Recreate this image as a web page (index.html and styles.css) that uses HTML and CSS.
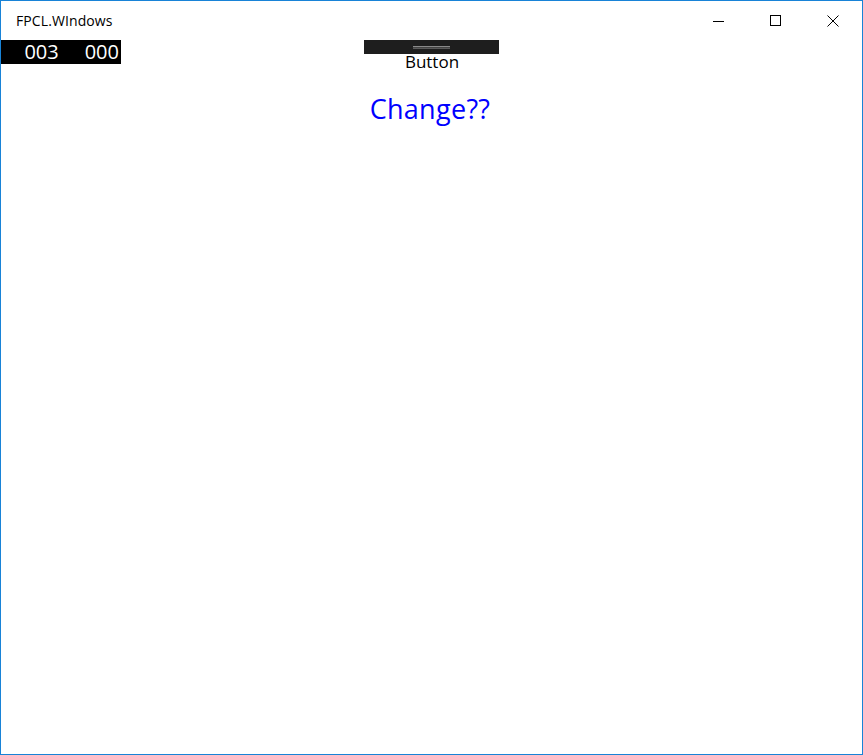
FILE: index.html
```html
<!DOCTYPE html>
<html>
<head>
<meta charset="utf-8">
<link rel="stylesheet" href="styles.css">
</head>
<body>
<div class="window">
  <div class="titlebar">
    <div class="title">FPCL.WIndows</div>
    <div class="controls">
      <div class="ctl"><svg width="12" height="12" viewBox="0 0 12 12"><path d="M0 6.5H11" stroke="#000" stroke-width="1"/></svg></div>
      <div class="ctl"><svg width="12" height="12" viewBox="0 0 12 12"><rect x="0.5" y="0.5" width="10" height="10" fill="none" stroke="#000" stroke-width="1"/></svg></div>
      <div class="ctl"><svg width="12" height="12" viewBox="0 0 12 12"><path d="M0.5 0.5L11.5 11.5M11.5 0.5L0.5 11.5" stroke="#000" stroke-width="1"/></svg></div>
    </div>
  </div>
  <div class="content">
    <div class="counter"><span>003</span><span>000</span></div>
    <div class="center">
      <div class="slider"><div class="grip"></div></div>
      <div class="btn">Button</div>
      <div class="change">Change??</div>
    </div>
  </div>
</div>
</body>
</html>
```
FILE: styles.css
```css
html, body { margin: 0; padding: 0; background: #fff; }
.window {
  width: 863px; height: 755px; box-sizing: border-box;
  border: 1px solid #1883d7; position: relative;
  font-family: "Open Sans", "Noto Sans", sans-serif;
}
.titlebar { height: 39px; display: flex; justify-content: space-between; }
.title { font-size: 14px; padding-left: 15px; line-height: 39px; color: #000; letter-spacing: 0.1px; }
.controls { display: flex; }
.ctl { width: 57px; height: 39px; display: flex; align-items: center; justify-content: center; }
.ctl:last-child { width: 58px; }
.content { position: relative; height: 714px; }
.counter {
  position: absolute; left: 0; top: 0; width: 120px; height: 24px;
  background: #000; color: #fff; font-size: 20px; line-height: 24px;
  display: flex; justify-content: flex-end; gap: 26px; padding-right: 2px; box-sizing: border-box;
}
.center { display: flex; flex-direction: column; align-items: center; }
.slider {
  width: 135px; height: 14px; background: #1e1e1e; display: flex; align-items: center; justify-content: center;
}
.grip { width: 37px; height: 1px; border-top: 1px solid #8a8a8a; border-bottom: 1px solid #5a5a5a; background: #444; }
.btn { font-size: 17px; line-height: 16px; color: #000; margin-left: 1px; }
.change { font-size: 27px; line-height: 30px; color: #0000ff; margin-top: 24px; letter-spacing: 0.3px; margin-right: 3px; }
```
